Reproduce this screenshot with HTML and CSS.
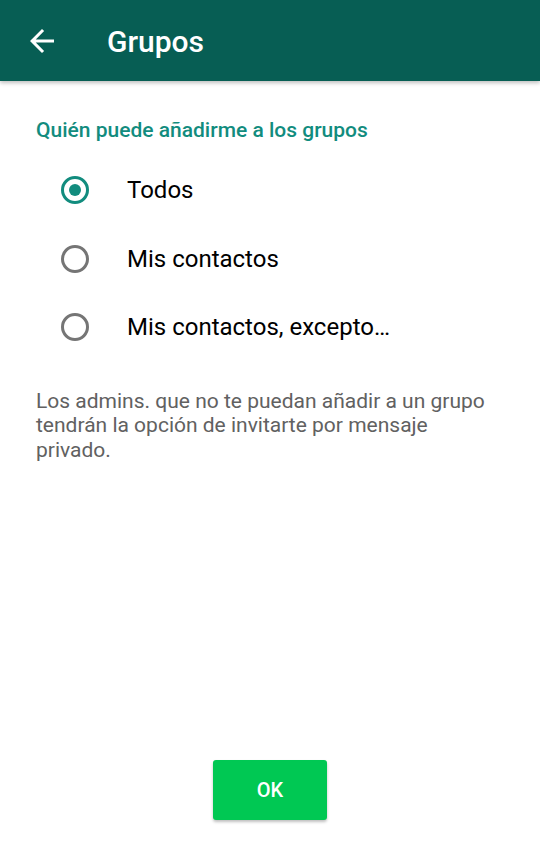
FILE: index.html
```html
<!DOCTYPE html>
<html lang="es">
<head>
<meta charset="utf-8">
<title>Grupos</title>
<link rel="stylesheet" href="styles.css">
</head>
<body>
<div class="screen">
  <header class="appbar">
    <svg class="back" viewBox="0 0 24 24"><path d="M20 11H7.83l5.59-5.59L12 4l-8 8 8 8 1.41-1.41L7.83 13H20v-2z" fill="#fff"/></svg>
    <h1 class="title">Grupos</h1>
  </header>
  <main class="content">
    <h2 class="section">Quién puede añadirme a los grupos</h2>
    <ul class="options">
      <li class="option"><span class="radio checked"></span><span class="label">Todos</span></li>
      <li class="option"><span class="radio"></span><span class="label">Mis contactos</span></li>
      <li class="option"><span class="radio"></span><span class="label">Mis contactos, excepto…</span></li>
    </ul>
    <p class="note">Los admins. que no te puedan añadir a un grupo tendrán la opción de invitarte por mensaje privado.</p>
  </main>
  <footer class="actions">
    <button class="ok">OK</button>
  </footer>
</div>
</body>
</html>
```
FILE: styles.css
```css
html, body {
  margin: 0;
  padding: 0;
  background: #fff;
}
body {
  font-family: Roboto, "Noto Sans", sans-serif;
}
.screen {
  width: 540px;
  height: 843px;
  display: flex;
  flex-direction: column;
  overflow: hidden;
}
.appbar {
  height: 81px;
  background: #075e54;
  display: flex;
  align-items: center;
  padding-left: 24px;
  box-shadow: 0 2px 4px rgba(0,0,0,0.25);
  position: relative;
  z-index: 1;
  flex-shrink: 0;
}
.back {
  width: 36px;
  height: 36px;
  flex-shrink: 0;
}
.title {
  margin: 2px 0 0 47px;
  color: #fff;
  font-size: 30px;
  font-weight: 500;
  line-height: normal;
}
.content {
  flex: 1;
  padding: 37px 50px 0 36px;
}
.section {
  margin: 0;
  font-size: 21px;
  font-weight: 500;
  color: #128c7e;
  line-height: 24px;
}
.options {
  list-style: none;
  margin: 14px 0 0 0;
  padding: 0;
}
.option {
  height: 68.5px;
  display: flex;
  align-items: center;
}
.radio {
  width: 22px;
  height: 22px;
  border: 3px solid #757575;
  border-radius: 50%;
  margin-left: 25px;
  box-sizing: content-box;
  position: relative;
  flex-shrink: 0;
}
.radio.checked {
  border-color: #128c7e;
}
.radio.checked::after {
  content: "";
  position: absolute;
  left: 5px;
  top: 5px;
  width: 12px;
  height: 12px;
  border-radius: 50%;
  background: #128c7e;
}
.label {
  margin-left: 38px;
  font-size: 24px;
  color: #000;
}
.note {
  margin: 27px 0 0 0;
  font-size: 21px;
  line-height: 24.5px;
  color: #616161;
}
.actions {
  display: flex;
  justify-content: center;
  padding-bottom: 23px;
}
.ok {
  width: 114px;
  height: 60px;
  background: #00c853;
  border: none;
  border-radius: 3px;
  color: #fff;
  font-family: Roboto, sans-serif;
  font-size: 20px;
  font-weight: 500;
  box-shadow: 0 2px 3px rgba(0,0,0,0.25);
}
```
